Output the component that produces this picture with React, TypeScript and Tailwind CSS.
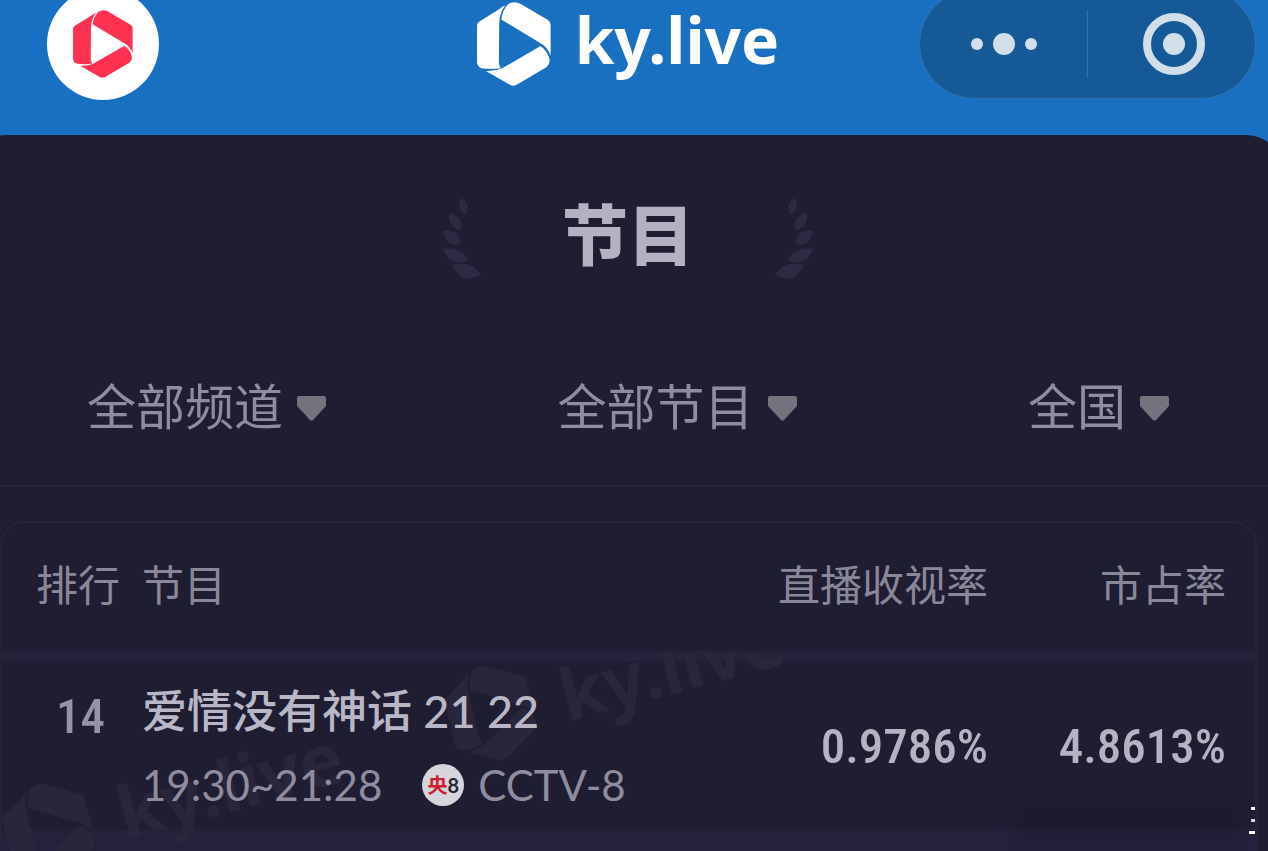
import { clsx } from 'clsx';

type Programme = {
  rank: number;
  title: string;
  time: string;
  channel: string;
  rating: string;
  share: string;
};

const programmes: Programme[] = [
  {
    rank: 14,
    title: '爱情没有神话 21 22',
    time: '19:30~21:28',
    channel: 'CCTV-8',
    rating: '0.9786%',
    share: '4.8613%',
  },
];

const filters = [
  { id: 'channel', label: '频道', options: ['全部频道'] },
  { id: 'programme', label: '节目', options: ['全部节目'] },
  { id: 'region', label: '地区', options: ['全国'] },
];

function LogoMark({ className }: { className?: string }) {
  return (
    <svg viewBox="0 0 220 250" className={className} fill="currentColor" aria-hidden="true">
      <path d="M0 70Q0 62 7 58L62 24Q72 15 84 10Q66 36 66 62L65 182Q66 192 71 197Q40 201 12 197Q0 190 0 180Z" />
      <path d="M72 52Q76 24 92 7Q110 -5 130 6L210 53Q219 59 219 68V160Q212 138 194 126Z" />
      <path d="M189 131Q212 148 216 172Q216 188 205 195L118 246Q108 252 98 246L26 205Q60 206 77 196Z" />
    </svg>
  );
}

function Laurel({ flipped }: { flipped?: boolean }) {
  return (
    <svg
      viewBox="0 0 114 240"
      className={clsx('h-20 w-[38px] text-[#2c2a43]', flipped && '-scale-x-100')}
      fill="currentColor"
      aria-hidden="true"
    >
      <path d="M56 0Q70 8 75 24Q78 38 68 49Q54 44 49 30Q46 14 56 0Z" />
      <path d="M21 44Q36 48 48 62Q60 78 52 96Q36 94 26 80Q14 64 21 44Z" />
      <path d="M0 98Q22 94 40 106Q56 120 53 139Q30 144 16 132Q2 118 0 98Z" />
      <path d="M0 153Q32 146 56 162Q70 174 74 189Q44 200 22 186Q8 174 0 153Z" />
      <path d="M29 202Q58 190 86 203Q104 214 114 230Q84 246 56 238Q38 226 29 202Z" />
    </svg>
  );
}

function FilterSelect({ id, label, options }: { id: string; label: string; options: string[] }) {
  return (
    <div className="flex items-center gap-3.5">
      <label htmlFor={id} className="sr-only">
        {label}
      </label>
      <select
        id={id}
        className="field-sizing-content h-20 appearance-none bg-transparent pb-2 text-[49px] leading-[72px] text-[#8f8c9f] outline-none"
      >
        {options.map((option) => (
          <option key={option}>{option}</option>
        ))}
      </select>
      <svg viewBox="0 0 29 25" className="h-[25px] w-[29px] text-[#72737e]" fill="currentColor" aria-hidden="true">
        <path d="M2 0H27Q29 0 29 2V10L16 24Q14.500 25.500 13 24L0 10V2Q0 0 2 0Z" />
      </svg>
    </div>
  );
}

function Watermark({ className }: { className: string }) {
  return (
    <div
      className={clsx('absolute flex -rotate-15 items-center gap-7 text-[#29263c]', className)}
      aria-hidden="true"
    >
      <LogoMark className="h-[98px] w-[86px]" />
      <span className="font-['Noto_Sans'] text-[72px] leading-none font-bold">ky.live</span>
    </div>
  );
}

function Header() {
  return (
    <header className="h-[135px] overflow-hidden pr-3">
      <div className="-mt-3 grid h-28 grid-cols-[1fr_auto_1fr] items-center">
        <a href="#" aria-label="首页" className="ml-[47px] flex size-28 items-center justify-center rounded-full bg-white">
          <LogoMark className="h-[68px] w-[60px] text-[#fd3150]" />
        </a>
        <div className="flex items-center gap-6 text-white">
          <LogoMark className="h-[84px] w-[74px]" />
          <span className="pb-2 font-['Noto_Sans'] text-[64px] leading-none font-bold">ky.live</span>
        </div>
        <div className="flex h-[110px] w-[337px] items-center justify-self-end rounded-full border border-[#2e74b3] bg-[#155a97] text-[#d2dfea]">
          <button aria-label="更多" className="flex h-full flex-1 items-center justify-center gap-2.5 px-0.5">
            <span className="size-3 rounded-full bg-current" />
            <span className="size-[22px] rounded-full bg-current" />
            <span className="size-3 rounded-full bg-current" />
          </button>
          <span className="h-[68px] w-px bg-[#2e74b3]" />
          <button aria-label="关闭" className="flex h-full flex-1 items-center justify-center pl-1">
            <span className="flex size-[62px] items-center justify-center rounded-full border-8 border-current">
              <span className="size-[22px] rounded-full bg-current" />
            </span>
          </button>
        </div>
      </div>
    </header>
  );
}

function RankingTable() {
  return (
    <section className="relative mt-[34px] mr-[11px] overflow-hidden rounded-t-3xl border-2 border-b-0 border-[#25223a]">
      <table className="w-full table-fixed border-separate border-spacing-0">
        <thead>
          <tr className="h-[138px] text-[42px] text-[#8a8799]">
            <th className="w-[140px] border-b-[10px] border-[#25223b] pb-2.5 pl-[34px] text-left font-normal">排行</th>
            <th className="border-b-[10px] border-[#25223b] pb-2.5 text-left font-normal">节目</th>
            <th className="w-[240px] border-b-[10px] border-[#25223b] pb-2.5 text-right font-normal">直播收视率</th>
            <th className="w-[267px] border-b-[10px] border-[#25223b] pr-[29px] pb-2.5 text-right font-normal">市占率</th>
          </tr>
        </thead>
        <tbody className="relative z-10">
          {programmes.map((item) => (
            <tr key={item.rank} className="h-[168px] font-['Roboto_Condensed','Roboto',sans-serif] font-medium">
              <td className="pt-7 pl-[54px] align-top text-[49px] leading-[56px] text-[#9593a4]">{item.rank}</td>
              <td className="pt-1 font-['Lato','Noto_Sans_CJK_SC',sans-serif] font-normal whitespace-nowrap">
                <div className="text-[45px] leading-[64px] font-medium text-[#b9b7c6]">{item.title}</div>
                <div className="mt-3 flex items-center text-[42px] leading-[60px] text-[#8f8c9f]">
                  <span>{item.time}</span>
                  <span className="mr-3.5 ml-10 flex size-[42px] items-center justify-center rounded-full bg-[#d6d4dc] text-xl leading-none font-bold text-[#2b2930]">
                    <span className="text-[#c8202f]">央</span>8
                  </span>
                  <span>{item.channel}</span>
                </div>
              </td>
              <td className="pt-1 text-right text-[49px] text-[#b5b3c2]">{item.rating}</td>
              <td className="pt-1 pr-[29px] text-right text-[49px] text-[#b5b3c2]">{item.share}</td>
            </tr>
          ))}
        </tbody>
      </table>
      <div className="h-[22px] bg-[#25213d]" />
      {/* Watermarks cover the separators but stay under the row text */}
      <div className="absolute inset-x-0 top-[130px] bottom-0 overflow-hidden">
        <Watermark className="top-24 left-0" />
        <Watermark className="-top-[22px] left-[442px]" />
      </div>
      <div className="absolute right-4 bottom-3 h-9 w-[220px] rounded-lg bg-[#1b182b] opacity-60 blur-sm" />
      <div className="absolute right-0 bottom-[17px] flex flex-col items-end gap-[9px]" aria-hidden="true">
        <span className="h-[3px] w-1 bg-white" />
        <span className="h-[3px] w-1 bg-[#d8d7de]" />
        <span className="h-[3px] w-1.5 bg-white" />
      </div>
    </section>
  );
}

export default function App() {
  return (
    <div className="overflow-hidden bg-[#1a70c0] font-['Noto_Sans_CJK_SC',sans-serif]">
      <Header />
      {/* The sheet runs past both window edges, so only part of each corner shows */}
      <main className="-mr-4 -ml-8 rounded-t-[38px] bg-[#1f1d32] pr-4 pl-8">
        <div className="mr-3 flex justify-center pt-[63px]">
          <div className="flex h-20 w-[370px] items-center justify-between">
            <Laurel />
            <h1 className="pb-3.5 text-[66px] leading-none font-black text-[#b4b2c1]">节目</h1>
            <Laurel flipped />
          </div>
        </div>
        <div className="mt-[90px] flex items-center justify-between border-b-2 border-[#25223a] pr-[99px] pb-[37px] pl-[87px]">
          {filters.map((filter) => (
            <FilterSelect key={filter.id} {...filter} />
          ))}
        </div>
        <RankingTable />
      </main>
    </div>
  );
}
